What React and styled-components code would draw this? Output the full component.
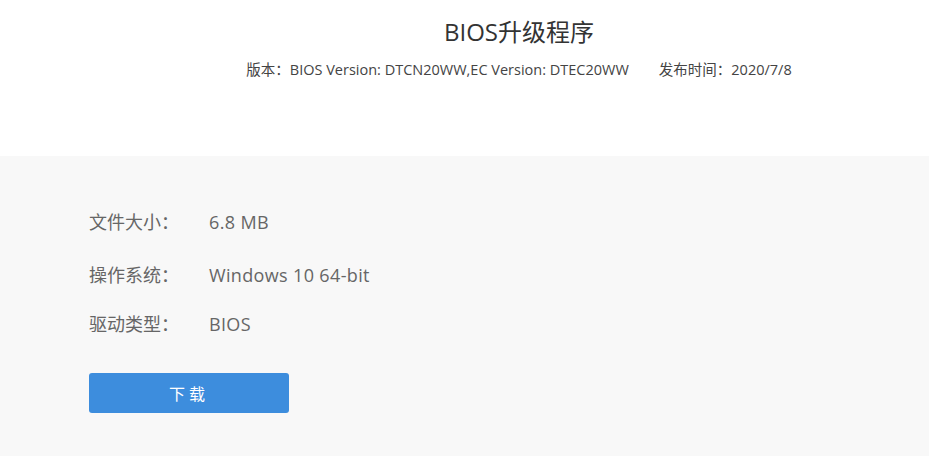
import React from "react";
import styled, { createGlobalStyle } from "styled-components";

const Global = createGlobalStyle`
  html, body { margin: 0; padding: 0; background: #ffffff; }
  body { font-family: "Open Sans", "Noto Sans CJK SC", sans-serif; }
`;

const Page = styled.div`
  width: 929px;
  height: 456px;
  overflow: hidden;
  display: flex;
  flex-direction: column;
`;

const Header = styled.header`
  height: 156px;
  box-sizing: border-box;
  padding: 14px 0 0 109px;
  display: flex;
  flex-direction: column;
  align-items: center;
  background: #ffffff;
`;

const Title = styled.h1`
  margin: 0;
  font-size: 24px;
  font-weight: 400;
  line-height: 36px;
  color: #333333;
`;

const Meta = styled.div`
  margin-top: 10px;
  display: flex;
  gap: 30px;
  font-size: 14.5px;
  line-height: 20px;
  color: #444444;
`;

const Body = styled.section`
  flex: 1;
  background: #f8f8f8;
  padding: 52px 0 0 89px;
  display: flex;
  flex-direction: column;
`;

const Row = styled.div`
  display: flex;
  align-items: baseline;
  height: ${(p) => p.h}px;
`;

const Label = styled.span`
  width: 120px;
  font-size: 18px;
  color: #666666;
`;

const Value = styled.span`
  font-size: 18px;
  letter-spacing: 0.35px;
  color: #666666;
`;

const Button = styled.button`
  margin-top: 33px;
  width: 200px;
  height: 40px;
  border: none;
  border-radius: 3px;
  background: #3d8ddd;
  color: #ffffff;
  font-family: "Noto Sans CJK SC", sans-serif;
  font-size: 16px;
  letter-spacing: 4px;
  cursor: pointer;
`;

export default function App() {
  return (
    <>
      <Global />
      <Page>
        <Header>
          <Title>BIOS升级程序</Title>
          <Meta>
            <span>版本：BIOS Version: DTCN20WW,EC Version: DTEC20WW</span>
            <span>发布时间：2020/7/8</span>
          </Meta>
        </Header>
        <Body>
          <Row h={53}>
            <Label>文件大小：</Label>
            <Value>6.8 MB</Value>
          </Row>
          <Row h={49}>
            <Label>操作系统：</Label>
            <Value>Windows 10 64-bit</Value>
          </Row>
          <Row h={30}>
            <Label>驱动类型：</Label>
            <Value>BIOS</Value>
          </Row>
          <Button>下载</Button>
        </Body>
      </Page>
    </>
  );
}
